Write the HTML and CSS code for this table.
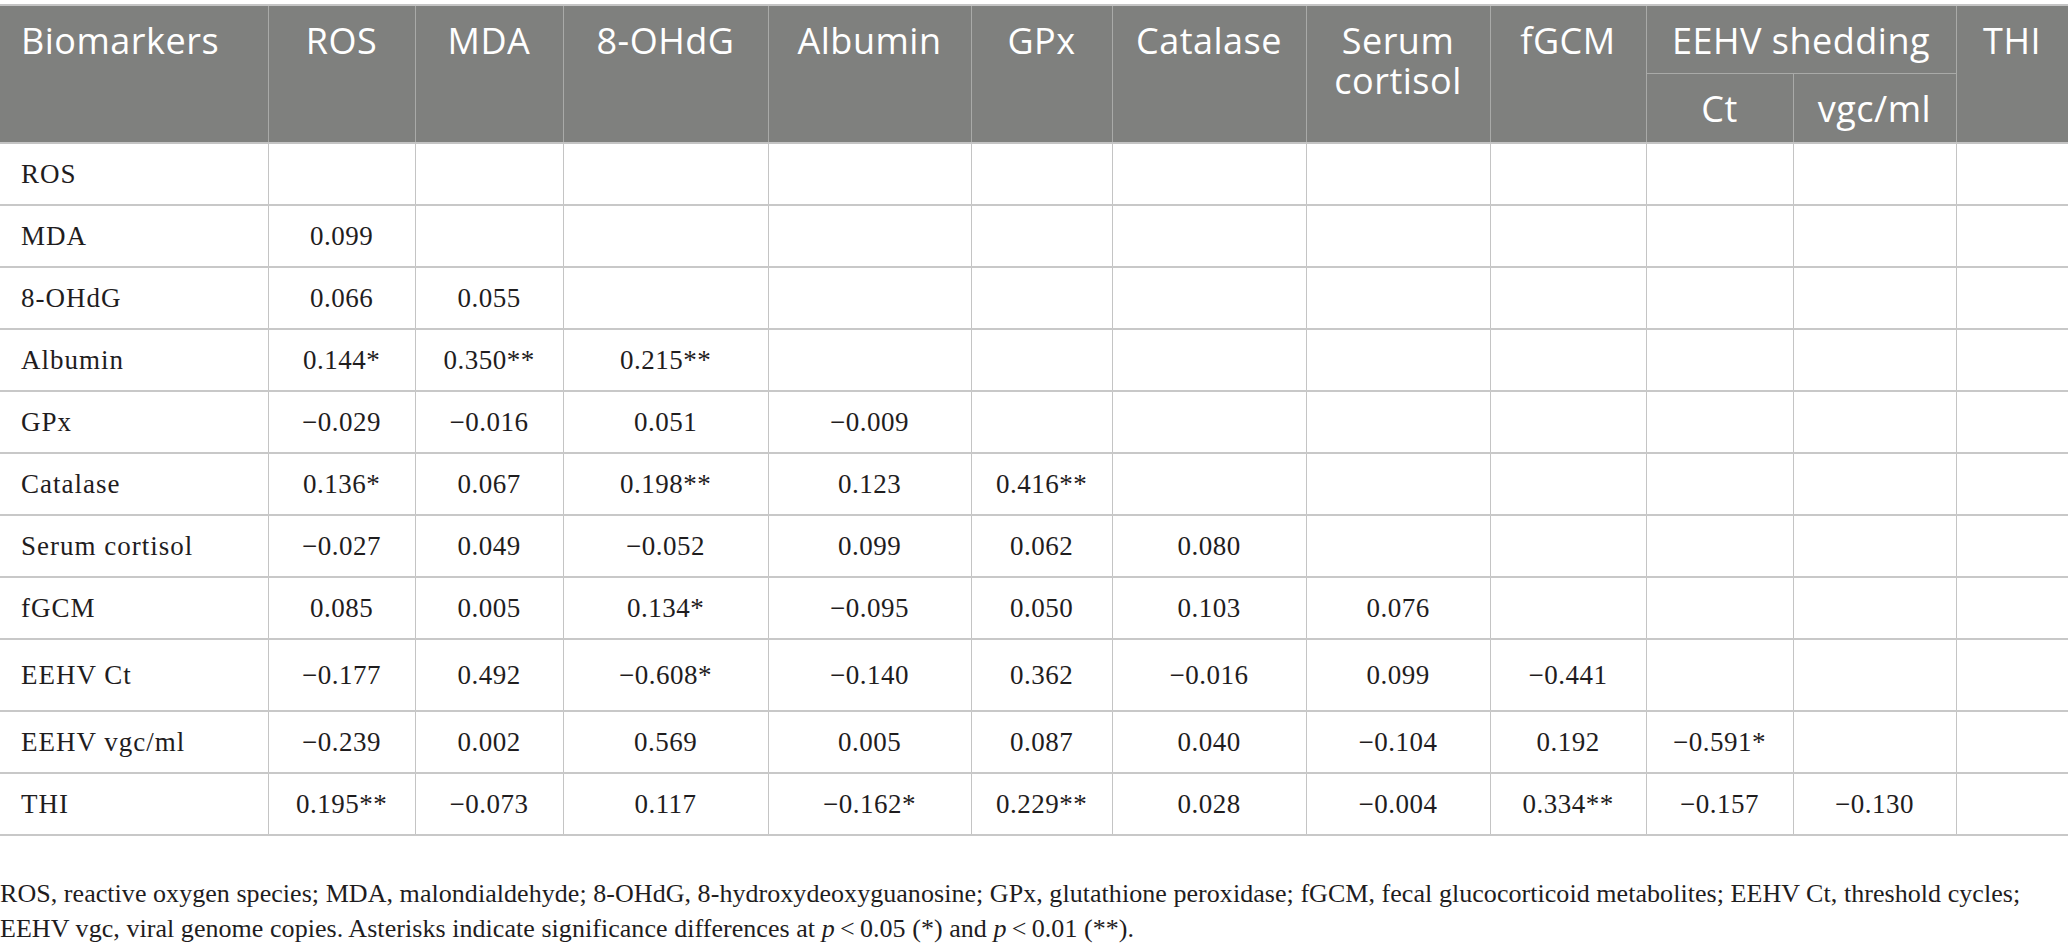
FILE: index.html
```html
<!DOCTYPE html>
<html lang="en">
<head>
    <meta charset="UTF-8">
    <meta name="viewport" content="width=device-width, initial-scale=1.0">
    <title>Correlation of biomarkers</title>
    <link rel="stylesheet" href="styles.css">
</head>
<body>

    <div class="page">
        <table class="corr">
            <colgroup>
                <col class="w-name">
                <col class="w-ros">
                <col class="w-mda">
                <col class="w-ohdg">
                <col class="w-alb">
                <col class="w-gpx">
                <col class="w-cat">
                <col class="w-cort">
                <col class="w-fgcm">
                <col class="w-ct">
                <col class="w-vgc">
                <col class="w-thi">
            </colgroup>
            <thead>
                <tr>
                    <th rowspan="2" class="first">Biomarkers</th>
                    <th rowspan="2">ROS</th>
                    <th rowspan="2">MDA</th>
                    <th rowspan="2">8-OHdG</th>
                    <th rowspan="2">Albumin</th>
                    <th rowspan="2">GPx</th>
                    <th rowspan="2">Catalase</th>
                    <th rowspan="2">Serum cortisol</th>
                    <th rowspan="2">fGCM</th>
                    <th colspan="2" class="group">EEHV shedding</th>
                    <th rowspan="2">THI</th>
                </tr>
                <tr>
                    <th class="sub">Ct</th>
                    <th class="sub">vgc/ml</th>
                </tr>
            </thead>
            <tbody>
                <tr>
                    <td>ROS</td>
                    <td></td><td></td><td></td><td></td><td></td><td></td><td></td><td></td><td></td><td></td><td></td>
                </tr>
                <tr>
                    <td>MDA</td>
                    <td>0.099</td>
                    <td></td><td></td><td></td><td></td><td></td><td></td><td></td><td></td><td></td><td></td>
                </tr>
                <tr>
                    <td>8-OHdG</td>
                    <td>0.066</td><td>0.055</td>
                    <td></td><td></td><td></td><td></td><td></td><td></td><td></td><td></td><td></td>
                </tr>
                <tr>
                    <td>Albumin</td>
                    <td>0.144*</td><td>0.350**</td><td>0.215**</td>
                    <td></td><td></td><td></td><td></td><td></td><td></td><td></td><td></td>
                </tr>
                <tr>
                    <td>GPx</td>
                    <td>&minus;0.029</td><td>&minus;0.016</td><td>0.051</td><td>&minus;0.009</td>
                    <td></td><td></td><td></td><td></td><td></td><td></td><td></td>
                </tr>
                <tr>
                    <td>Catalase</td>
                    <td>0.136*</td><td>0.067</td><td>0.198**</td><td>0.123</td><td>0.416**</td>
                    <td></td><td></td><td></td><td></td><td></td><td></td>
                </tr>
                <tr>
                    <td>Serum cortisol</td>
                    <td>&minus;0.027</td><td>0.049</td><td>&minus;0.052</td><td>0.099</td><td>0.062</td><td>0.080</td>
                    <td></td><td></td><td></td><td></td><td></td>
                </tr>
                <tr>
                    <td>fGCM</td>
                    <td>0.085</td><td>0.005</td><td>0.134*</td><td>&minus;0.095</td><td>0.050</td><td>0.103</td><td>0.076</td>
                    <td></td><td></td><td></td><td></td>
                </tr>
                <tr class="tall">
                    <td>EEHV Ct</td>
                    <td>&minus;0.177</td><td>0.492</td><td>&minus;0.608*</td><td>&minus;0.140</td><td>0.362</td><td>&minus;0.016</td><td>0.099</td><td>&minus;0.441</td>
                    <td></td><td></td><td></td>
                </tr>
                <tr>
                    <td>EEHV vgc/ml</td>
                    <td>&minus;0.239</td><td>0.002</td><td>0.569</td><td>0.005</td><td>0.087</td><td>0.040</td><td>&minus;0.104</td><td>0.192</td><td>&minus;0.591*</td>
                    <td></td><td></td>
                </tr>
                <tr>
                    <td>THI</td>
                    <td>0.195**</td><td>&minus;0.073</td><td>0.117</td><td>&minus;0.162*</td><td>0.229**</td><td>0.028</td><td>&minus;0.004</td><td>0.334**</td><td>&minus;0.157</td><td>&minus;0.130</td>
                    <td></td>
                </tr>
            </tbody>
        </table>

        <p class="note">
            ROS, reactive oxygen species; MDA, malondialdehyde; 8-OHdG, 8-hydroxydeoxyguanosine; GPx, glutathione peroxidase; fGCM, fecal glucocorticoid metabolites; EEHV Ct, threshold cycles;<br>
            EEHV vgc, viral genome copies. Asterisks indicate significance differences at <i>p</i>&thinsp;&lt;&thinsp;0.05 (*) and <i>p</i>&thinsp;&lt;&thinsp;0.01 (**).
        </p>
    </div>

</body>
</html>
```

FILE: styles.css
```css
body {
    margin: 0;
    padding: 0;
    background: #ffffff;
    color: #1f1d1e;
    font-family: 'Liberation Serif', 'Times New Roman', serif;
}
.page {
    padding-top: 4px;
}
.corr {
    width: 100%;
    table-layout: fixed;
    border-collapse: collapse;
    border-top: 2px solid #c4c4c4;
    border-bottom: 2px solid #c4c4c4;
}
.w-name { width: 268px; }
.w-ros { width: 147px; }
.w-mda { width: 148px; }
.w-ohdg { width: 205px; }
.w-alb { width: 203px; }
.w-gpx { width: 141px; }
.w-cat { width: 194px; }
.w-cort { width: 184px; }
.w-fgcm { width: 156px; }
.w-ct { width: 147px; }
.w-vgc { width: 163px; }
.w-thi { width: 112px; }

.corr th {
    background: #7f807e;
    color: #ffffff;
    font-family: 'Open Sans', 'Liberation Sans', sans-serif;
    font-weight: 400;
    font-size: 36px;
    letter-spacing: 0.5px;
    line-height: 40px;
    text-align: center;
    vertical-align: top;
    padding: 15px 6px 0;
    border: 1px solid #a9aaa8;
    border-top: none;
}
.corr thead tr:first-child th {
    height: 52px;
}
.corr th.sub {
    height: 53px;
}
.corr th.first {
    text-align: left;
    padding-left: 21px;
    border-left: none;
}
.corr thead tr:last-child th,
.corr th[rowspan] {
    border-bottom: 2px solid #c4c4c4;
}
.corr td {
    height: 60px;
    padding: 0 8px;
    font-size: 27px;
    letter-spacing: 0.5px;
    text-align: center;
    vertical-align: middle;
    border-left: 1px solid #c4c4c4;
    border-right: 1px solid #c4c4c4;
    border-bottom: 2px solid #c8c8c8;
}
.corr td:first-child {
    text-align: left;
    letter-spacing: 1px;
    padding-left: 21px;
    border-left: none;
}
.corr td:last-child,
.corr th:last-child {
    border-right: 1px solid #c4c4c4;
}
.corr tr.tall td {
    height: 70px;
}
.note {
    margin: 40px 0 0;
    font-size: 26px;
    letter-spacing: 0.05px;
    line-height: 35px;
}
```
